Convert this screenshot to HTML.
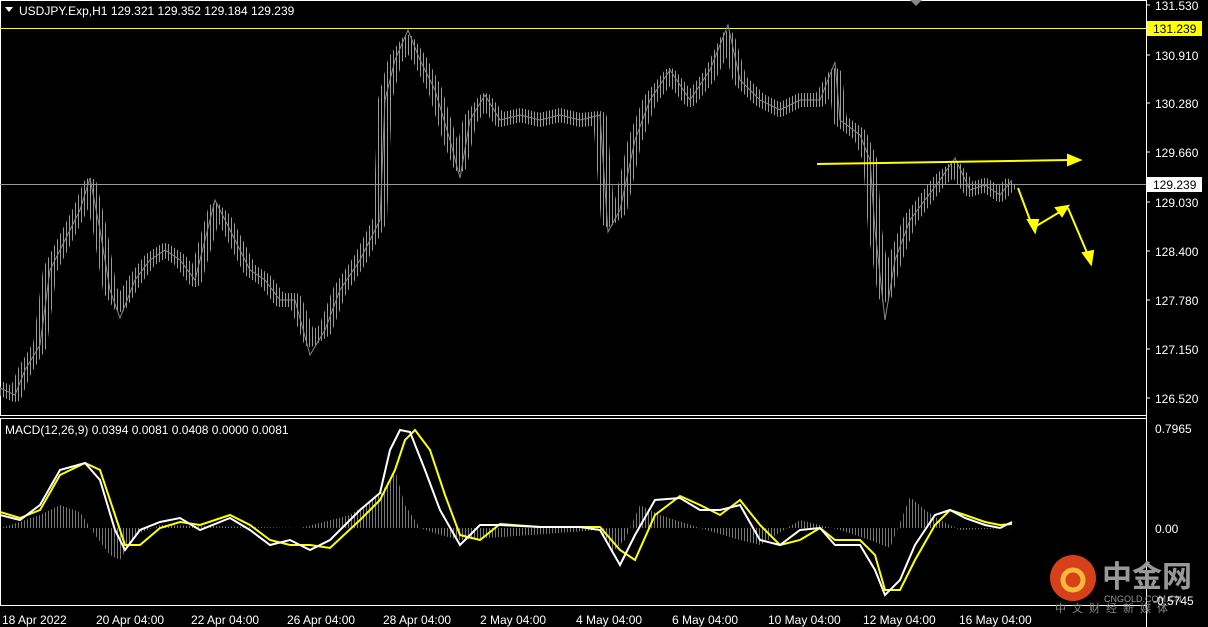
<!DOCTYPE html><html><head><style>
body{margin:0;background:#000;width:1208px;height:627px;overflow:hidden;font-family:"Liberation Sans",sans-serif}
svg{position:absolute;left:0;top:0}
</style></head><body>
<svg width="1208" height="627" font-family="Liberation Sans, sans-serif" font-size="12">
<defs>
<pattern id="vp" width="3" height="4" patternUnits="userSpaceOnUse"><rect x="0" y="0" width="1" height="4" fill="#9a9a9a"/></pattern>
<pattern id="hp" width="3" height="4" patternUnits="userSpaceOnUse"><rect x="0" y="0" width="1" height="4" fill="#777"/></pattern>
</defs>
<rect width="1208" height="627" fill="#000"/>
<rect x="0.5" y="0.5" width="1146" height="415" fill="none" stroke="#fff"/>
<rect x="0.5" y="418.5" width="1146" height="187" fill="none" stroke="#fff"/>
<line x1="1146.5" y1="0" x2="1146.5" y2="627" stroke="#fff"/>
<polygon points="910,0 922,0 916,6" fill="#888"/>
<polygon points="5,7 13,7 9,12" fill="#fff"/>
<text x="19" y="15" fill="#fff">USDJPY.Exp,H1  129.321 129.352 129.184 129.239</text>
<line x1="0" y1="28.5" x2="1146" y2="28.5" stroke="#ff0"/>
<line x1="0" y1="184.5" x2="1146" y2="184.5" stroke="#999"/>
<!-- price bars -->
<polyline fill="none" stroke="url(#vp)" stroke-width="14" stroke-linejoin="round" points="0,388 15,395 25,370 40,345 50,270 65,240 80,210 90,185 100,230 110,290 120,305 135,280 150,260 165,250 180,260 195,280 215,210 225,220 235,240 250,270 265,280 280,300 295,300 310,340 325,330 340,290 360,260 380,220 385,100 395,60 408,42 420,60 435,90 450,140 460,165 470,120 485,100 500,120 520,115 540,120 560,115 580,120 600,118 608,220 620,210 635,140 650,100 670,75 690,100 710,75 728,38 740,80 760,100 780,110 800,100 820,100 835,75 840,120 860,135 870,160 875,230 885,295 895,260 910,220 925,200 940,180 955,168 970,190 985,185 1000,195 1012,182"/>
<polyline fill="none" stroke="#888" stroke-width="1" points="0,388 15,395 25,370 40,345 50,270 65,240 80,210 90,178 100,230 110,290 120,318 135,280 150,260 165,250 180,260 195,280 215,200 225,220 235,240 250,270 265,280 280,300 295,300 310,355 325,330 340,290 360,260 380,220 385,100 395,60 408,30 420,60 435,90 450,140 460,178 470,120 485,95 500,120 520,115 540,120 560,115 580,120 600,115 608,232 620,210 635,140 650,100 670,70 690,100 710,70 728,25 740,80 760,100 780,110 800,100 820,100 835,62 840,120 860,135 870,160 875,230 885,320 895,260 910,220 925,200 940,180 955,158 970,190 985,185 1000,195 1012,180"/>
<g stroke="#ff0" stroke-width="2" fill="#ff0">
<line x1="817" y1="164" x2="1070" y2="160"/><polygon points="1080,160 1068,155 1068,165"/>
<polyline fill="none" points="1018,188 1033,228 1063,210"/><polygon points="1035,232 1028,220 1038,220"/><polygon points="1068,206 1056,208 1062,216"/>
<line x1="1068" y1="208" x2="1088" y2="255"/><polygon points="1091,264 1083,253 1093,251"/>
</g>
<g fill="#fff">
<text x="1155" y="10">131.530</text><text x="1155" y="60">130.910</text><text x="1155" y="108">130.280</text><text x="1155" y="157">129.660</text><text x="1155" y="207">129.030</text><text x="1155" y="256">128.400</text><text x="1155" y="305">127.780</text><text x="1155" y="354">127.150</text><text x="1155" y="403">126.520</text>
<text x="1155" y="433">0.7965</text><text x="1155" y="533">0.00</text>
</g>
<g stroke="#fff"><line x1="1146" y1="5" x2="1150" y2="5"/><line x1="1146" y1="55" x2="1150" y2="55"/><line x1="1146" y1="103" x2="1150" y2="103"/><line x1="1146" y1="152" x2="1150" y2="152"/><line x1="1146" y1="202" x2="1150" y2="202"/><line x1="1146" y1="251" x2="1150" y2="251"/><line x1="1146" y1="300" x2="1150" y2="300"/><line x1="1146" y1="349" x2="1150" y2="349"/><line x1="1146" y1="398" x2="1150" y2="398"/></g>
<rect x="1147" y="21" width="55" height="15" fill="#ff0"/><text x="1153" y="33" fill="#000">131.239</text>
<rect x="1147" y="177" width="55" height="15" fill="#fff"/><text x="1153" y="189" fill="#000">129.239</text>
<text x="5" y="434" fill="#fff">MACD(12,26,9) 0.0394 0.0081 0.0408 0.0000 0.0081</text>
<!-- histogram -->
<polygon fill="url(#hp)" points="0,528 20,522 40,515 60,505 80,512 95,535 110,555 120,560 135,535 160,525 300,528 350,515 380,495 395,470 405,505 420,528 440,535 460,540 600,530 612,552 625,540 640,505 660,515 700,528 740,540 760,545 800,520 840,530 870,540 890,548 910,497 925,510 940,520 960,530 1012,528 1012,528 0,528"/>
<polyline fill="none" stroke="#ff0" stroke-width="2" points="0,512 20,518 40,510 60,475 85,463 100,470 115,515 125,545 140,545 160,528 180,522 200,525 230,515 250,525 270,540 290,545 310,545 330,548 360,520 380,500 395,470 405,440 415,430 430,450 445,495 460,535 480,540 500,524 540,527 580,527 600,527 620,550 635,560 655,515 680,496 700,505 720,515 740,500 760,525 780,545 800,540 820,528 835,540 860,540 875,555 885,590 900,590 915,560 935,525 950,510 965,515 985,522 1000,525 1012,524"/>
<polyline fill="none" stroke="#fff" stroke-width="2" points="0,515 20,520 40,505 60,470 85,463 100,480 115,530 125,550 140,530 160,522 180,518 200,530 230,518 250,530 270,545 290,540 310,550 330,540 360,510 380,493 390,450 400,430 410,432 425,470 440,510 460,545 480,525 500,525 540,527 580,527 600,530 620,565 635,535 655,500 680,498 700,510 720,510 740,505 760,540 780,545 800,530 820,528 835,545 860,545 875,570 885,595 900,580 915,545 935,515 950,510 965,518 985,525 1000,528 1012,522"/>
<g fill="#fff"><text x="2" y="624">18 Apr 2022</text><text x="96" y="624">20 Apr 04:00</text><text x="191" y="624">22 Apr 04:00</text><text x="287" y="624">26 Apr 04:00</text><text x="383" y="624">28 Apr 04:00</text><text x="480" y="624">2 May 04:00</text><text x="576" y="624">4 May 04:00</text><text x="672" y="624">6 May 04:00</text><text x="768" y="624">10 May 04:00</text><text x="863" y="624">12 May 04:00</text><text x="959" y="624">16 May 04:00</text></g>
<circle cx="1073" cy="578" r="23" fill="#d8401a"/>
<circle cx="1073" cy="580" r="10" fill="none" stroke="#f6b93b" stroke-width="5"/>
<text x="1102" y="587" fill="#999" font-size="30" font-weight="bold" font-family="Noto Sans CJK SC, sans-serif">中金网</text>
<text x="1104" y="602" fill="#999" font-size="9">CNGOLD.COM.CN</text>
<text x="1055" y="612" fill="#888" font-size="11" letter-spacing="6" font-family="Noto Sans CJK SC, sans-serif">中文财经新媒体</text>
<text x="1153" y="605" fill="#fff">-0.5745</text>
</svg>
</body></html>
